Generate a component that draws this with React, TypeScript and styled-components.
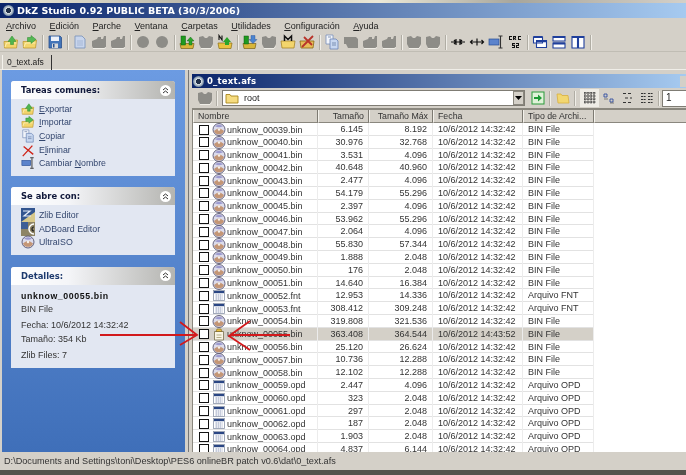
import React from "react";
import styled, { createGlobalStyle } from "styled-components";

const GlobalStyle = createGlobalStyle`
  html, body { margin: 0; padding: 0; background: #d4d0c8; }
  body { font-family: "Liberation Sans", Arial, sans-serif; font-size: 9px; color: #222; }
  u { text-underline-offset: 1px; }
`;

type ToolKind =
  | "folderUp" | "folderIn" | "save" | "doc" | "grayDoc" | "grayDisc" | "greenBox" | "grayBox"
  | "yellowUp" | "boxDown" | "folderM" | "folderX" | "pageCopy" | "grayPage" | "join" | "split"
  | "rename" | "crc" | "cascade" | "horiz" | "vert";

const ToolIcon: React.FC<{ kind: ToolKind }> = ({ kind }) => {
  const folder = (
    <>
      <path d="M1 7.500h5l1-1.500h7.500l-1 8H1.500z" fill="#f3d56c" stroke="#c09a34" strokeWidth=".8" />
      <path d="M2 13l1.500-4h10" fill="none" stroke="#fff4c0" strokeWidth=".8" />
    </>
  );
  switch (kind) {
    case "folderUp":
      return (
        <svg width="16" height="16" viewBox="0 0 16 16">
          {folder}
          <path d="M5 7.500l4-5.500 4 5.500h-2.500v3h-3v-3z" fill="#4fb64f" stroke="#2c8a2c" strokeWidth=".5" />
        </svg>
      );
    case "folderIn":
      return (
        <svg width="16" height="16" viewBox="0 0 16 16">
          {folder}
          <path d="M9 1.500l5 4-5 4V7.500H5.500v-4H9z" fill="#55b855" stroke="#2c8a2c" strokeWidth=".5" />
        </svg>
      );
    case "save":
      return (
        <svg width="16" height="16" viewBox="0 0 16 16">
          <path d="M2 2h11l1.500 1.500V14H2z" fill="#4274b8" stroke="#2a4f8c" strokeWidth=".8" />
          <rect x="4" y="2.500" width="8" height="4.500" fill="#eef2fa" />
          <rect x="5" y="9.500" width="6" height="4.500" fill="#d8d8d8" />
          <rect x="6" y="10" width="1.500" height="3.500" fill="#27508f" />
        </svg>
      );
    case "doc":
      return (
        <svg width="16" height="16" viewBox="0 0 16 16">
          <path d="M3 2h7l3 3v9H3z" fill="#c8d5ec" stroke="#8096bc" strokeWidth=".9" />
          <path d="M5 7h6M5 9h6M5 11h6" stroke="#9db0d2" strokeWidth=".8" />
        </svg>
      );
    case "grayDoc":
      return (
        <svg width="16" height="16" viewBox="0 0 16 16">
          <path d="M1 7l5-2 1-2h3v2h2l1-3h2v11l-2 1H2l-1-2z" fill="#8d8c87" />
          <path d="M2 14.500h11.500l1.500-1" stroke="#f6f4ee" strokeWidth=".8" fill="none" />
        </svg>
      );
    case "grayDisc":
      return (
        <svg width="16" height="16" viewBox="0 0 16 16">
          <circle cx="8" cy="8" r="6" fill="#8d8c87" />
        </svg>
      );
    case "greenBox":
      return (
        <svg width="16" height="16" viewBox="0 0 16 16">
          <path d="M1 9.500h14l-1 5H2z" fill="#d8b63a" stroke="#7a6216" strokeWidth=".7" />
          <rect x="2" y="2" width="4.500" height="9" fill="#1f9a1f" stroke="#0e5e0e" strokeWidth=".5" />
          <path d="M8 7l3.500-4L15 7h-2v4h-3V7z" fill="#2aa52a" stroke="#0e5e0e" strokeWidth=".4" />
        </svg>
      );
    case "grayBox":
      return (
        <svg width="16" height="16" viewBox="0 0 16 16">
          <path d="M1 3l4-1 2 2h2l2-2 4 1v7l-2 4H3L1 10z" fill="#8d8c87" />
          <path d="M3 14.500h10l1.500-2" stroke="#f6f4ee" strokeWidth=".8" fill="none" />
        </svg>
      );
    case "yellowUp":
      return (
        <svg width="16" height="16" viewBox="0 0 16 16">
          <path d="M1 9h14l-1 5.500H2z" fill="#e9c33f" stroke="#8a6e18" strokeWidth=".7" />
          <path d="M6 8l4-5 4 5h-2v3H8V8z" fill="#2aa52a" />
          <path d="M2 6V1.500L5 6V1.500" fill="none" stroke="#111" strokeWidth="1.100" />
        </svg>
      );
    case "boxDown":
      return (
        <svg width="16" height="16" viewBox="0 0 16 16">
          <path d="M1 9.500h13l-1 5H2z" fill="#d8b63a" stroke="#7a6216" strokeWidth=".7" />
          <rect x="2" y="2" width="4.500" height="8" fill="#1f9a1f" stroke="#0e5e0e" strokeWidth=".5" />
          <path d="M9 1.500h4v4h2l-4 4-4-4h2z" fill="#4b84d0" stroke="#274f92" strokeWidth=".4" />
        </svg>
      );
    case "folderM":
      return (
        <svg width="16" height="16" viewBox="0 0 16 16">
          <path d="M1 7h14l-1 7H2z" fill="#f3d56c" stroke="#a8862a" strokeWidth=".8" />
          <path d="M4.500 7V2l3.500 3.500L11.500 2v5" stroke="#111" strokeWidth="1.500" fill="none" />
        </svg>
      );
    case "folderX":
      return (
        <svg width="16" height="16" viewBox="0 0 16 16">
          <path d="M1 7h14l-1 7H2z" fill="#e8bc5a" stroke="#8a6a10" strokeWidth=".8" />
          <path d="M3 13L14 2M5 3l8 8" stroke="#b8332a" strokeWidth="1.800" />
        </svg>
      );
    case "pageCopy":
      return (
        <svg width="16" height="16" viewBox="0 0 16 16">
          <path d="M2 1h7v9H2z" fill="#f2f5fb" stroke="#7a90ba" strokeWidth=".8" />
          <path d="M6 5h6l2 2v8H6z" fill="#c8d7f0" stroke="#6a84b6" strokeWidth=".8" />
          <path d="M4 3h3M8 9h4M8 11h4" stroke="#5a7099" strokeWidth=".7" />
        </svg>
      );
    case "grayPage":
      return (
        <svg width="16" height="16" viewBox="0 0 16 16">
          <path d="M1 3h12l2 2v9H5L3 10H1z" fill="#8d8c87" />
        </svg>
      );
    case "join":
      return (
        <svg width="16" height="16" viewBox="0 0 16 16">
          <path d="M1 8h14M6 5v6M10 5v6M4 6l2 2-2 2M12 6l-2 2 2 2" stroke="#111" strokeWidth="1.200" fill="none" />
        </svg>
      );
    case "split":
      return (
        <svg width="16" height="16" viewBox="0 0 16 16">
          <path d="M1 8h14M8 4.500v7M3.500 6l-2 2 2 2M12.500 6l2 2-2 2" stroke="#111" strokeWidth="1.200" fill="none" />
        </svg>
      );
    case "rename":
      return (
        <svg width="16" height="16" viewBox="0 0 16 16">
          <rect x="1" y="5" width="10" height="6" fill="#5b83cc" stroke="#2a4f94" strokeWidth=".7" />
          <path d="M12.500 2.500v11M10.500 2h4M10.500 14h4" stroke="#333" strokeWidth="1.100" fill="none" />
        </svg>
      );
    case "crc":
      return (
        <svg width="16" height="16" viewBox="0 0 16 16">
          <path d="M2 2h3v1H3v2h2v1H2zM6 2h3v2.500H8L9.500 6H8L7 4.500V6H6zM7 3v.7h1V3zM11 2h3v1h-2v2h2v1h-3zM5 9h3v1H6v.700h2V14H5v-1h2v-1H5zM9 9h3v3h-2v1h2v1H9v-3h2v-1H9z" fill="#111" />
        </svg>
      );
    case "cascade":
      return (
        <svg width="16" height="16" viewBox="0 0 16 16">
          <path d="M1.500 3h9v6h-9zM4.500 6.500h10v7h-10z" fill="#fff" stroke="#1f3f9c" strokeWidth="1.100" />
          <path d="M1.500 3h9M4.500 7.200h10" stroke="#1f3f9c" strokeWidth="2" />
        </svg>
      );
    case "horiz":
      return (
        <svg width="16" height="16" viewBox="0 0 16 16">
          <path d="M2 2.500h12v4.500H2zM2 9h12v5H2z" fill="#fff" stroke="#1f3f9c" strokeWidth="1.100" />
          <path d="M2 3h12M2 9.500h12" stroke="#1f3f9c" strokeWidth="2" />
        </svg>
      );
    default:
      return (
        <svg width="16" height="16" viewBox="0 0 16 16">
          <path d="M2 2.500h5.500V14H2zM8.500 2.500H14V14H8.500z" fill="#fff" stroke="#1f3f9c" strokeWidth="1.100" />
          <path d="M2 3h5.500M8.500 3H14" stroke="#1f3f9c" strokeWidth="2" />
        </svg>
      );
  }
};

const toolGroups: ToolKind[][] = [
  ["folderUp", "folderIn"],
  ["save"],
  ["doc", "grayDoc", "grayDoc"],
  ["grayDisc", "grayDisc"],
  ["greenBox", "grayBox", "yellowUp"],
  ["boxDown", "grayBox", "folderM", "folderX"],
  ["pageCopy", "grayPage", "grayDoc", "grayDoc"],
  ["grayBox", "grayBox"],
  ["join", "split", "rename", "crc"],
  ["cascade", "horiz", "vert"],
];

const menus: [string, string][] = [
  ["A", "rchivo"], ["E", "dición"], ["P", "arche"], ["V", "entana"],
  ["C", "arpetas"], ["U", "tilidades"], ["C", "onfiguración"], ["A", "yuda"],
];

const DiscIcon = () => (
  <svg width="14" height="13" viewBox="0 0 14 13">
    <circle cx="7" cy="6.500" r="6" fill="#dcdcec" stroke="#565470" strokeWidth=".9" />
    <path d="M2 8a5.200 4.600 0 0 0 10 0c-2-1.300-3-2.500-5-2.500s-3 1.200-5 2.500z" fill="#c49676" />
    <path d="M3 3.300a4.800 3.600 0 0 1 8 0c-2.600 1.400-5.400 1.400-8 0z" fill="#9c9ad0" />
    <circle cx="7" cy="6.500" r="1.200" fill="#f6f0e8" />
  </svg>
);

const WindowIcon = () => (
  <svg width="14" height="13" viewBox="0 0 14 13">
    <rect x="1.500" y="1.500" width="11" height="10" fill="#fff" stroke="#8a94a8" strokeWidth=".8" />
    <rect x="2" y="2" width="10" height="2.200" fill="#2a4684" />
    <path d="M3.500 6h7M3.500 8h7M3.500 10h7" stroke="#5a6a9a" strokeWidth=".7" strokeDasharray="1.500 .6" />
  </svg>
);

const BinderIcon = () => (
  <svg width="14" height="13" viewBox="0 0 14 13">
    <path d="M2.500 3.500h9v8.500h-9z" fill="#f8f4e4" stroke="#77704c" strokeWidth=".8" />
    <path d="M4 3.500L5 1h4l1 2.500z" fill="#e8c040" stroke="#77601c" strokeWidth=".6" />
    <path d="M4.500 7h5M4.500 9.500h5" stroke="#9a9060" strokeWidth=".7" />
  </svg>
);

const CollapseIcon = () => (
  <CollapseDisc>
    <svg width="7" height="7" viewBox="0 0 7 7">
      <path d="M1 3l2.500-2L6 3M1 6l2.500-2L6 6" fill="none" stroke="#333" strokeWidth="1" />
    </svg>
  </CollapseDisc>
);

const taskLinks: { icon: React.ReactNode; key: string; before: string; after: string }[] = [
  { icon: <ToolIcon kind="folderUp" />, before: "", key: "E", after: "xportar" },
  { icon: <ToolIcon kind="folderIn" />, before: "", key: "I", after: "mportar" },
  { icon: <ToolIcon kind="pageCopy" />, before: "", key: "C", after: "opiar" },
  {
    icon: (
      <svg width="16" height="16" viewBox="0 0 16 16">
        <path d="M2 15L13 3M3 4l11 9" stroke="#cf2318" strokeWidth="1.500" />
      </svg>
    ),
    before: "E",
    key: "l",
    after: "iminar",
  },
  { icon: <ToolIcon kind="rename" />, before: "Cambiar ", key: "N", after: "ombre" },
];

const ZlibIcon = () => (
  <svg width="14" height="14" viewBox="0 0 14 14">
    <rect width="14" height="14" fill="#33558f" />
    <path d="M0 14l14-10v10z" fill="#d8c88a" />
    <path d="M2 3h7L3 8h7" stroke="#e8eef8" strokeWidth="1.200" fill="none" />
  </svg>
);

const AdboardIcon = () => (
  <svg width="14" height="14" viewBox="0 0 14 14">
    <rect width="14" height="14" fill="#8d8466" />
    <path d="M0 0h7v7H0z" fill="#3f5f96" />
    <path d="M13 2a5 5 0 1 0 0 10" stroke="#fff" fill="none" strokeWidth="1.500" />
    <path d="M13 5a2 2 0 1 0 0 4" stroke="#222" fill="none" strokeWidth="1.200" />
  </svg>
);

type FileRow = { id: string; ext: string; size: string; max: string; date?: string };

const files: FileRow[] = [
  { id: "39", ext: "bin", size: "6.145", max: "8.192" },
  { id: "40", ext: "bin", size: "30.976", max: "32.768" },
  { id: "41", ext: "bin", size: "3.531", max: "4.096" },
  { id: "42", ext: "bin", size: "40.648", max: "40.960" },
  { id: "43", ext: "bin", size: "2.477", max: "4.096" },
  { id: "44", ext: "bin", size: "54.179", max: "55.296" },
  { id: "45", ext: "bin", size: "2.397", max: "4.096" },
  { id: "46", ext: "bin", size: "53.962", max: "55.296" },
  { id: "47", ext: "bin", size: "2.064", max: "4.096" },
  { id: "48", ext: "bin", size: "55.830", max: "57.344" },
  { id: "49", ext: "bin", size: "1.888", max: "2.048" },
  { id: "50", ext: "bin", size: "176", max: "2.048" },
  { id: "51", ext: "bin", size: "14.640", max: "16.384" },
  { id: "52", ext: "fnt", size: "12.953", max: "14.336" },
  { id: "53", ext: "fnt", size: "308.412", max: "309.248" },
  { id: "54", ext: "bin", size: "319.808", max: "321.536" },
  { id: "55", ext: "bin", size: "363.408", max: "364.544", date: "10/6/2012 14:43:52" },
  { id: "56", ext: "bin", size: "25.120", max: "26.624" },
  { id: "57", ext: "bin", size: "10.736", max: "12.288" },
  { id: "58", ext: "bin", size: "12.102", max: "12.288" },
  { id: "59", ext: "opd", size: "2.447", max: "4.096" },
  { id: "60", ext: "opd", size: "323", max: "2.048" },
  { id: "61", ext: "opd", size: "297", max: "2.048" },
  { id: "62", ext: "opd", size: "187", max: "2.048" },
  { id: "63", ext: "opd", size: "1.903", max: "2.048" },
  { id: "64", ext: "opd", size: "4.837", max: "6.144" },
];

const typeNames: Record<string, string> = { bin: "BIN File", fnt: "Arquivo FNT", opd: "Arquivo OPD" };

const App: React.FC = () => {
  return (
    <Screen>
      <GlobalStyle />
      <PhotoEdge />
      <TitleBar>
        <TitleLogo />
        DkZ Studio 0.92 PUBLIC BETA (30/3/2006)
      </TitleBar>
      <MenuBar>
        {menus.map(([key, rest]) => (
          <span key={key + rest}>
            <u>{key}</u>
            {rest}
          </span>
        ))}
      </MenuBar>
      <ToolBar>
        {toolGroups.map((group, g) => (
          <React.Fragment key={g}>
            {group.map((kind, i) => (
              <ToolButton key={i}>
                <ToolIcon kind={kind} />
              </ToolButton>
            ))}
            <ToolSep />
          </React.Fragment>
        ))}
      </ToolBar>
      <TabStrip>
        <Tab>0_text.afs</Tab>
      </TabStrip>
      <Workspace>
        <SidePanel>
          <Card>
            <CardHead>
              Tareas comunes:
              <CollapseIcon />
            </CardHead>
            <CardLinks>
              {taskLinks.map((l) => (
                <LinkRow key={l.key}>
                  {l.icon}
                  <span>
                    {l.before}
                    <u>{l.key}</u>
                    {l.after}
                  </span>
                </LinkRow>
              ))}
            </CardLinks>
          </Card>
          <Card>
            <CardHead>
              Se abre con:
              <CollapseIcon />
            </CardHead>
            <CardLinks>
              <LinkRow><ZlibIcon /> Zlib Editor</LinkRow>
              <LinkRow><AdboardIcon /> ADBoard Editor</LinkRow>
              <LinkRow><DiscIcon /> UltraISO</LinkRow>
            </CardLinks>
          </Card>
          <Card>
            <CardHead $blue>
              Detalles:
              <CollapseIcon />
            </CardHead>
            <Details>
              <DetailName>unknow_00055.bin</DetailName>
              <DetailLine>BIN File</DetailLine>
              <DetailLine $top={3}>Fecha: 10/6/2012 14:32:42</DetailLine>
              <DetailLine>Tamaño: 354 Kb</DetailLine>
              <DetailLine $top={3}>Zlib Files: 7</DetailLine>
            </Details>
          </Card>
        </SidePanel>
        <FileWindow>
          <WindowTitle>
            <TitleLogo />
            0_text.afs
            <WindowButton />
          </WindowTitle>
          <PathBar>
            <PathTool>
              <ToolIcon kind="grayBox" />
            </PathTool>
            <ToolSep />
            <PathCombo>
              <svg width="14" height="12" viewBox="0 0 14 12">
                <path d="M1 2.500h4l1 1.500h7v7H1z" fill="#f6dc80" stroke="#a8861c" strokeWidth=".9" />
              </svg>
              root
              <ComboArrow>
                <svg width="7" height="4" viewBox="0 0 7 4">
                  <path d="M0 0h7L3.500 4z" fill="#000" />
                </svg>
              </ComboArrow>
            </PathCombo>
            <PathTool>
              <svg width="14" height="14" viewBox="0 0 14 14">
                <rect x="1" y="1" width="12" height="12" fill="#dff2d8" stroke="#2b9a3a" />
                <path d="M3 6h4V3.500L11 7l-4 3.500V8H3z" fill="#1d9a35" />
              </svg>
            </PathTool>
            <ToolSep />
            <PathTool>
              <svg width="14" height="14" viewBox="0 0 14 14">
                <path d="M1 3h4l1 1.500h6L13 12H2z" fill="#f2d771" stroke="#d8b040" strokeWidth=".8" />
              </svg>
            </PathTool>
            <ToolSep />
            <PathTool $active>
              <svg width="12" height="12" viewBox="0 0 12 12">
                <path d="M0 1h12M0 4h12M0 7h12M0 10h12M1 0v12M4 0v12M7 0v12M10 0v12" stroke="#222" strokeWidth="1" strokeDasharray="1.200 .5" />
              </svg>
            </PathTool>
            <PathTool>
              <svg width="12" height="12" viewBox="0 0 12 12">
                <path d="M1 2h3v3H1zM7 7h3v3H7z" fill="none" stroke="#1f3f9c" strokeWidth=".8" />
                <path d="M1 7h4M7 11h4" stroke="#444" strokeWidth=".6" />
              </svg>
            </PathTool>
            <PathTool>
              <svg width="12" height="12" viewBox="0 0 12 12">
                <path d="M1 1.500h3M6 1.500h3M3 6h3M8 6h2M1 10.500h3M6 10.500h3" stroke="#333" strokeWidth="1" />
              </svg>
            </PathTool>
            <PathTool>
              <svg width="12" height="12" viewBox="0 0 12 12">
                <path d="M0 1.500h5M7 1.500h5M0 4.500h5M7 4.500h5M0 7.500h5M7 7.500h5M0 10.500h5M7 10.500h5" stroke="#333" strokeWidth="1" strokeDasharray="2 .6" />
              </svg>
            </PathTool>
            <ToolSep />
            <PageInput>1</PageInput>
          </PathBar>
          <TableFrame>
            <HeadRow>
              <HeadCell>Nombre</HeadCell>
              <HeadCell $right>Tamaño</HeadCell>
              <HeadCell $right>Tamaño Máx</HeadCell>
              <HeadCell>Fecha</HeadCell>
              <HeadCell>Tipo de Archi...</HeadCell>
              <HeadFill />
            </HeadRow>
            {files.map((f) => (
              <Row key={f.id} $selected={f.id === "55"}>
                <NameCell>
                  <CheckBox />
                  {f.id === "55" ? <BinderIcon /> : f.ext === "bin" ? <DiscIcon /> : <WindowIcon />}
                  <span>unknow_000{f.id}.{f.ext}</span>
                </NameCell>
                <Cell $right>{f.size}</Cell>
                <Cell $right>{f.max}</Cell>
                <Cell>{f.date ?? "10/6/2012 14:32:42"}</Cell>
                <Cell>{typeNames[f.ext]}</Cell>
              </Row>
            ))}
          </TableFrame>
        </FileWindow>
      </Workspace>
      <StatusBar>D:\Documents and Settings\toni\Desktop\PES6 onlineBR patch v0.6\dat\0_text.afs</StatusBar>
      <BottomEdge />
      <Arrows width="686" height="475" viewBox="0 0 686 475">
        <path d="M100 335H196M180 322L197 335L180 345" fill="none" stroke="#d2191c" strokeWidth="1.800" />
        <path d="M290 335H230M250 321L229 336L250 350" fill="none" stroke="#d2191c" strokeWidth="1.800" />
      </Arrows>
    </Screen>
  );
};

export default App;

// Styled components
const Screen = styled.div`
  position: relative;
  width: 686px;
  height: 475px;
  overflow: hidden;
  display: flex;
  flex-direction: column;
  background: #d4d0c8;
  filter: blur(0.3px);
`;

const PhotoEdge = styled.div`
  height: 3px;
  flex: none;
  background: linear-gradient(90deg, #ece9d8, #b8b5a8 30%, #ece9d8 55%, #a8a69c 75%, #d4d0c8);
`;

const TitleBar = styled.div`
  height: 15px;
  flex: none;
  display: flex;
  align-items: center;
  gap: 3px;
  padding-left: 3px;
  background: linear-gradient(90deg, #0a246a, #a6caf0);
  color: #fff;
  font: bold 9.5px "DejaVu Sans", sans-serif;
`;

const TitleLogo = styled.span`
  width: 11px;
  height: 11px;
  border-radius: 50%;
  background: radial-gradient(circle, #20304a 30%, #dfe4e8 35%, #7088a0 70%);
`;

const MenuBar = styled.div`
  height: 15px;
  flex: none;
  display: flex;
  align-items: center;
  gap: 13.500px;
  padding-left: 6px;
  font-size: 9px;
  color: #222;
`;

const ToolBar = styled.div`
  height: 18px;
  flex: none;
  display: flex;
  align-items: center;
  padding-left: 1.500px;
`;

const ToolButton = styled.div`
  width: 19px;
  height: 18px;
  display: flex;
  align-items: center;
  justify-content: center;
  flex: none;
`;

const ToolSep = styled.div`
  width: 1px;
  height: 15px;
  flex: none;
  margin: 0 3px 0 2px;
  background: #b0ada4;
  box-shadow: 1px 0 0 #f0eee8;
`;

const TabStrip = styled.div`
  height: 19px;
  flex: none;
  padding: 3px 0 0 2px;
  box-sizing: border-box;
  border-bottom: 1px solid #f0eee8;
  border-top: 1px solid #c0bdb4;
`;

const Tab = styled.div`
  width: 50px;
  height: 15px;
  box-sizing: border-box;
  padding-left: 4px;
  line-height: 14px;
  font-size: 8.500px;
  color: #222;
  border-right: 1px solid #333;
  border-left: 1px solid #f4f2ec;
`;

const Workspace = styled.div`
  flex: 1;
  min-height: 0;
  display: flex;
  padding-left: 2px;
`;

const SidePanel = styled.div`
  width: 183px;
  flex: none;
  box-sizing: border-box;
  padding: 11px 10px 0 9px;
  display: flex;
  flex-direction: column;
  gap: 11.500px;
  background: linear-gradient(180deg, #6c9be2, #3f6fb9);
`;

const Card = styled.div`
  background: #e2e7f2;
  border-radius: 3px 3px 0 0;
`;

const CardHead = styled.div<{ $blue?: boolean }>`
  height: 18px;
  display: flex;
  align-items: center;
  justify-content: space-between;
  padding: 0 4px 0 10px;
  background: linear-gradient(90deg, #ffffff, #f4f5f8 35%, #b4b4b0);
  border-radius: 3px 3px 0 0;
  font: bold 8.400px "DejaVu Sans", sans-serif;
  color: ${({ $blue }) => ($blue ? "#1d3a6e" : "#10183a")};
`;

const CollapseDisc = styled.span`
  width: 11px;
  height: 11px;
  border-radius: 50%;
  background: #fff;
  display: flex;
  align-items: center;
  justify-content: center;
`;

const CardLinks = styled.div`
  padding: 3px 8px 6px 10px;
  display: flex;
  flex-direction: column;
`;

const LinkRow = styled.div`
  height: 13.600px;
  display: flex;
  align-items: center;
  gap: 4px;
  font-size: 8.800px;
  color: #33466e;

  svg {
    flex: none;
    width: 14px;
    height: 14px;
  }
`;

const Details = styled.div`
  padding: 4px 10px 5px;
`;

const DetailName = styled.div`
  font: bold 8.800px "Liberation Sans", sans-serif;
  letter-spacing: 0.6px;
  color: #111;
  line-height: 14px;
`;

const DetailLine = styled.div<{ $top?: number }>`
  margin-top: ${({ $top }) => $top ?? 0}px;
  line-height: 13.500px;
  font-size: 9px;
  color: #333;
`;

const FileWindow = styled.div`
  flex: 1;
  min-width: 0;
  margin-left: 3px;
  padding: 4px 0 0 3px;
  box-sizing: border-box;
  border-left: 1px solid #777;
  display: flex;
  flex-direction: column;
`;

const WindowTitle = styled.div`
  height: 14px;
  flex: none;
  display: flex;
  align-items: center;
  gap: 3px;
  padding-left: 1px;
  background: linear-gradient(90deg, #0a246a, #a6caf0);
  color: #fff;
  font: bold 8.500px "DejaVu Sans", sans-serif;
  letter-spacing: 0.2px;
`;

const WindowButton = styled.span`
  margin-left: auto;
  width: 6px;
  height: 11px;
  background: #d4d0c8;
`;

const PathBar = styled.div`
  height: 20px;
  flex: none;
  display: flex;
  align-items: center;
  padding: 0 0 0 3px;
  border-bottom: 1px solid #8a877e;
`;

const PathTool = styled.div<{ $active?: boolean }>`
  width: 19px;
  height: 18px;
  flex: none;
  display: flex;
  align-items: center;
  justify-content: center;
  margin-left: ${({ $active }) => ($active ? "2px" : "0")};
  background: ${({ $active }) => ($active ? "#eeece6" : "transparent")};
`;

const PathCombo = styled.div`
  width: 303px;
  height: 16px;
  flex: none;
  box-sizing: border-box;
  display: flex;
  align-items: center;
  gap: 5px;
  padding-left: 2px;
  margin: 0 3px 0 2px;
  background: #fff;
  border: 1px solid #7f7c74;
  font-size: 9px;
`;

const ComboArrow = styled.span`
  margin-left: auto;
  width: 11px;
  height: 14px;
  margin-right: 0;
  display: flex;
  align-items: center;
  justify-content: center;
  background: #d4d0c8;
  border: 1px solid #8a877e;
  box-sizing: border-box;
`;

const PageInput = styled.div`
  flex: 1;
  height: 15px;
  padding-left: 3px;
  background: #fff;
  border: 1px solid #7f7c74;
  border-right: none;
  line-height: 14px;
  font-size: 10px;
`;

const TableFrame = styled.div`
  flex: 1;
  min-height: 0;
  overflow: hidden;
  background: #fff;
  border-left: 1px solid #8a877e;
  border-top: 1px solid #8a877e;
`;

const HeadRow = styled.div`
  display: grid;
  grid-template-columns: 125px 51px 64px 90px 71px 1fr;
  height: 13px;
  background: #d4d0c8;
`;

const HeadCell = styled.div<{ $right?: boolean }>`
  box-sizing: border-box;
  padding: 0 4px;
  text-align: ${({ $right }) => ($right ? "right" : "left")};
  line-height: 12px;
  font-size: 8.800px;
  color: #333;
  border-right: 1px solid #7d7a72;
  border-left: 1px solid #f4f2ec;
  border-bottom: 1px solid #8a877e;
  white-space: nowrap;
  overflow: hidden;
`;

const HeadFill = styled.div`
  border-left: 1px solid #f4f2ec;
  border-bottom: 1px solid #8a877e;
`;

const Row = styled.div<{ $selected?: boolean }>`
  display: grid;
  grid-template-columns: 125px 51px 64px 90px 71px;
  height: 12.800px;
  box-sizing: border-box;
  border-bottom: 1px solid #e2e2e2;
  background: ${({ $selected }) => ($selected ? "#d4d0c8" : "transparent")};
  color: #333;
  line-height: 12px;
  width: 401px;
`;

const Cell = styled.div<{ $right?: boolean }>`
  box-sizing: border-box;
  padding: 0 5px;
  text-align: ${({ $right }) => ($right ? "right" : "left")};
  border-right: 1px solid #ececec;
  font-size: 9px;
  white-space: nowrap;
`;

const NameCell = styled(Cell)`
  display: flex;
  align-items: center;
  padding: 0 0 0 6px;

  svg {
    flex: none;
    margin-right: 1px;
  }
`;

const CheckBox = styled.span`
  width: 10px;
  height: 10px;
  box-sizing: border-box;
  flex: none;
  margin-right: 3px;
  background: #fff;
  border: 1.500px solid #111;
`;

const StatusBar = styled.div`
  height: 18px;
  flex: none;
  box-sizing: border-box;
  padding-left: 4px;
  line-height: 18px;
  font-size: 9.150px;
  color: #333;
`;

const BottomEdge = styled.div`
  height: 5px;
  flex: none;
  background: #55534d;
`;

const Arrows = styled.svg`
  position: absolute;
  top: 0;
  left: 0;
  pointer-events: none;
`;
